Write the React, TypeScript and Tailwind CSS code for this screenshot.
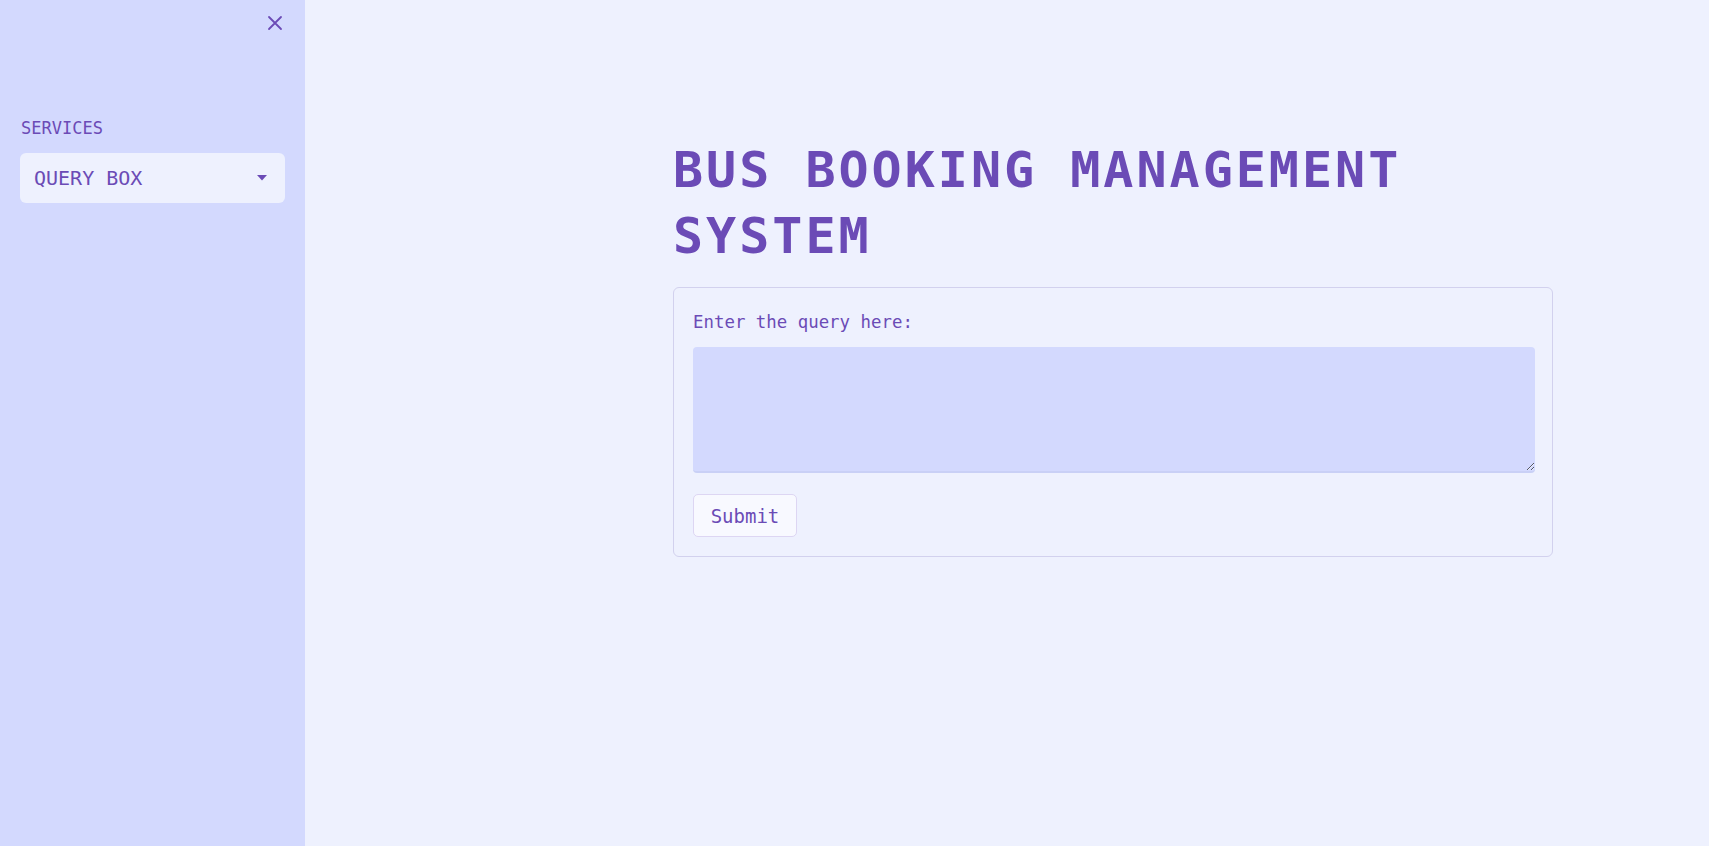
import React from "react";

const mono = "font-['DejaVu_Sans_Mono','Liberation_Mono',monospace]";

const App = () => {
  return (
    <div className={`flex h-[846px] w-full overflow-hidden bg-[#eef1fe] text-[#6b4bb6] ${mono}`}>
      {/* Sidebar */}
      <aside className="relative flex w-[305px] shrink-0 flex-col bg-[#d3d9fe] px-[20px]">
        <button className="absolute left-[267px] top-[15px] flex h-[16px] w-[16px] items-center justify-center">
          <svg width="16" height="16" viewBox="0 0 16 16" fill="none" stroke="#6b4bb6" strokeWidth="1.8" strokeLinecap="round">
            <path d="M2 2 L14 14 M14 2 L2 14" />
          </svg>
        </button>
        <div className="mt-[116px] pl-[1px] text-[17px] leading-[24px]">SERVICES</div>
        <div className="mt-[13px] flex h-[50px] w-[265px] items-center justify-between rounded-[6px] bg-[#eef1fe] pl-[14px] pr-[18px]">
          <span className="text-[20px] leading-[24px]">QUERY BOX</span>
          <svg width="10" height="6" viewBox="0 0 10 6">
            <path d="M0 0 H10 L5 5.5 Z" fill="#6b4bb6" />
          </svg>
        </div>
      </aside>

      {/* Main */}
      <main className="flex-1 pl-[368px] pt-[137px]">
        <div className="w-[880px]">
          <h1 className="text-[50px] font-bold leading-[66px] tracking-[3px]">
            BUS BOOKING MANAGEMENT
            <br />
            SYSTEM
          </h1>
          <form
            className="mt-[18px] flex flex-col rounded-[6px] border border-[#d2d1ee] px-[19px] pb-[19px] pt-[22px]"
            onSubmit={(e) => e.preventDefault()}
          >
            <label className="text-[17.4px] leading-[24px]">Enter the query here:</label>
            <textarea className="mt-[13px] h-[126px] w-[842px] resize-y rounded-[4px] border-b-2 border-[#c9d0f6] bg-[#d3d9fe] outline-none" />
            <button
              type="submit"
              className="mt-[21px] h-[43px] w-[104px] rounded-[5px] border border-[#ddd6f3] bg-[#f8f9ff] text-[19px] leading-[24px] text-[#6b4bb6]"
            >
              Submit
            </button>
          </form>
        </div>
      </main>
    </div>
  );
};

export default App;
